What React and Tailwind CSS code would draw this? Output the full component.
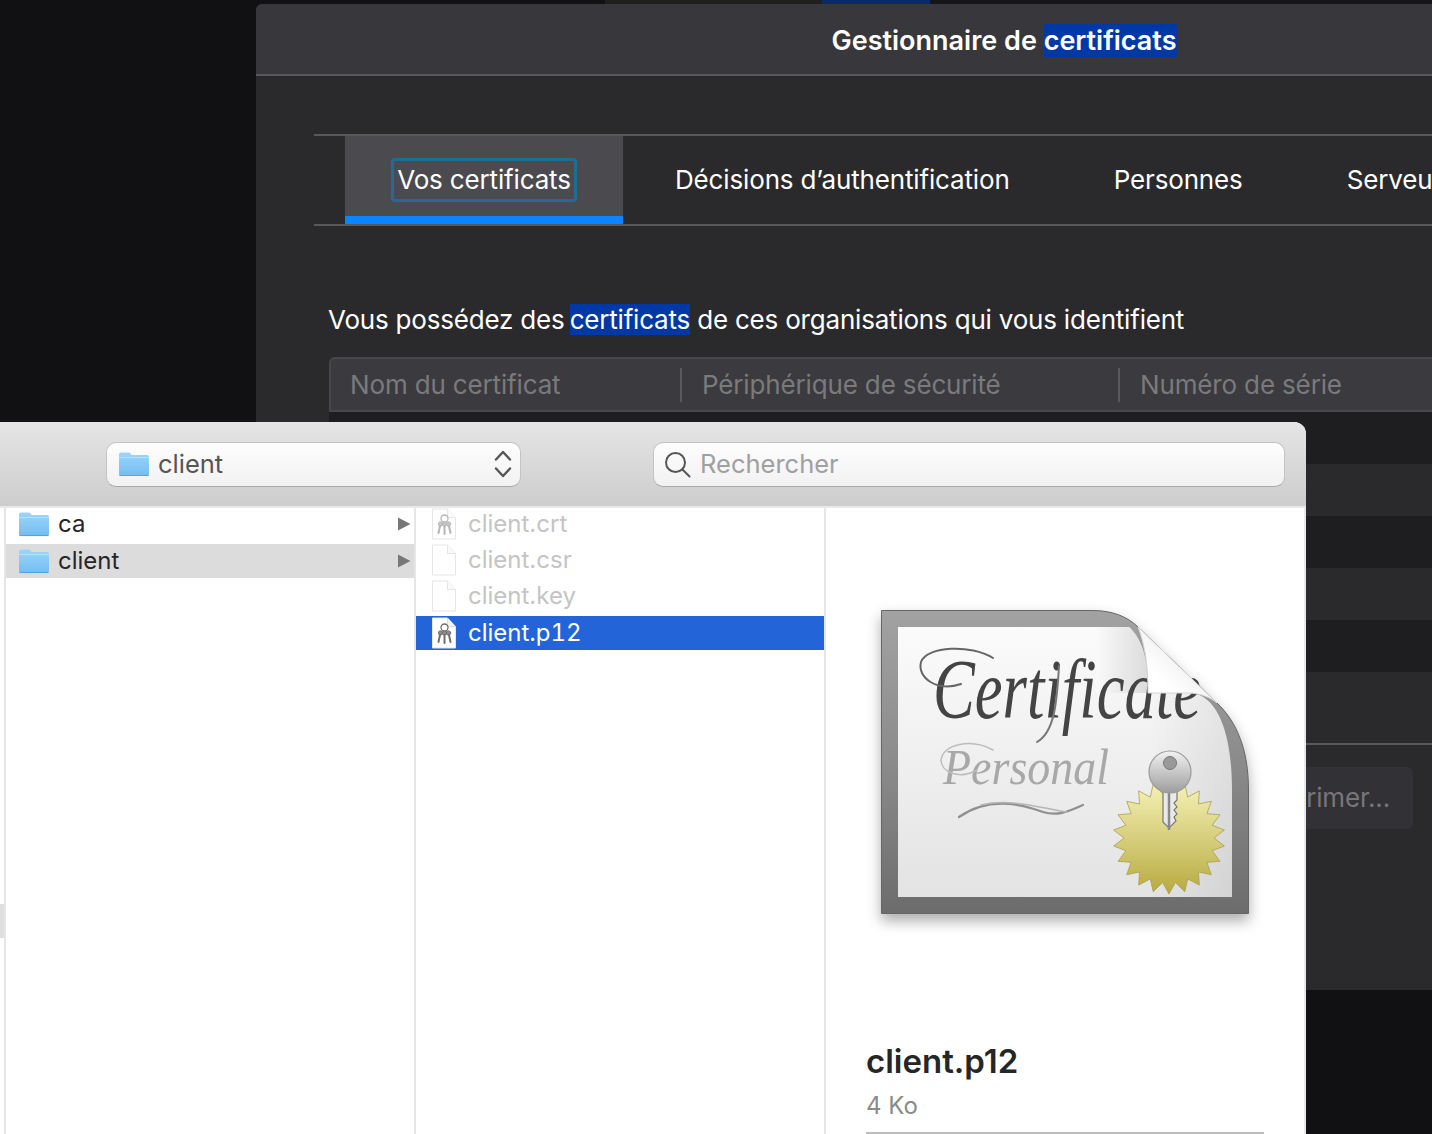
const FONT = { fontFamily: "Inter, 'Noto Sans', sans-serif" };

const ROWS = ["bg-[#1e1e20]", "bg-[#2a2a2d]", "bg-[#1e1e20]", "bg-[#2a2a2d]", "bg-[#1e1e20]", "bg-[#2a2a2d]"];

// 22 pointed seal behind the key
const SEAL_POINTS = Array.from({ length: 44 }, (_, i) => {
  const r = i % 2 === 0 ? 56 : 45;
  const a = (i / 44) * Math.PI * 2 - Math.PI / 2;
  return `${(298 + r * Math.cos(a)).toFixed(1)},${(238 + r * Math.sin(a)).toFixed(1)}`;
}).join(" ");

function FolderIcon({ id }) {
  return (
    <svg width="32" height="26" viewBox="0 0 32 26" className="shrink-0">
      <defs>
        <linearGradient id={id} x1="0" y1="0" x2="0" y2="1">
          <stop offset="0" stopColor="#9ad6fb" />
          <stop offset="1" stopColor="#74bdf1" />
        </linearGradient>
      </defs>
      <path d="M1 3.500C1 2.400 1.800 1.500 3 1.500h7.500c1 0 1.600.4 2.200 1.200l1 1.300H29c1.200 0 2 .8 2 2v17c0 1.200-.8 2-2 2H3c-1.200 0-2-.8-2-2z" fill={`url(#${id})`} />
      <path d="M1 6.500h30" stroke="#b6e2fc" strokeWidth="1" />
      <path d="M1.500 24.500h29" stroke="#5aa3d8" strokeWidth="1.200" />
    </svg>
  );
}

function FileIcon({ keys, dim }) {
  return (
    <svg width="26" height="32" viewBox="0 0 26 32" className={`-ml-px shrink-0 ${dim ? "opacity-50" : ""}`}>
      <path d="M1.500 1h15l8 8.500V31h-23z" fill="#fff" stroke={dim ? "#ccc" : "#e6e6e6"} strokeWidth="1" />
      <path d="M16.500 1v8.500h8" fill="#f4f4f4" stroke={dim ? "#ccc" : "#ddd"} strokeWidth="1" />
      {keys && (
        <g stroke="#6f6f6f" fill="none" strokeLinecap="round">
          <circle cx="13.500" cy="10.500" r="3.500" strokeWidth="1.300" />
          <circle cx="9.500" cy="16" r="2.200" fill="#8a8a8a" strokeWidth="0.800" />
          <circle cx="13.500" cy="16" r="2.200" fill="#8a8a8a" strokeWidth="0.800" />
          <circle cx="17.500" cy="16" r="2.200" fill="#8a8a8a" strokeWidth="0.800" />
          <path d="M9 18 7.500 25M13.500 18v8M18 18l1.500 7" strokeWidth="2" />
        </g>
      )}
    </svg>
  );
}

function Chevron() {
  return (
    <svg width="14" height="14" viewBox="0 0 14 14" className="ml-auto mr-[3px] shrink-0">
      <path d="M1 0.500 13.500 7 1 13.500z" fill="#777" />
    </svg>
  );
}

function CertificateIcon() {
  return (
    <svg width="400" height="340" viewBox="0 0 400 340" className="ml-[45px] mt-[92px] shrink-0 drop-shadow-[0_7px_7px_rgba(0,0,0,0.32)]">
      <defs>
        <linearGradient id="frame" x1="0" y1="0" x2="0" y2="1">
          <stop offset="0" stopColor="#a2a2a2" />
          <stop offset="0.5" stopColor="#8b8b8b" />
          <stop offset="1" stopColor="#6c6c6c" />
        </linearGradient>
        <linearGradient id="page" x1="0" y1="0" x2="0" y2="1">
          <stop offset="0" stopColor="#fbfbfb" />
          <stop offset="1" stopColor="#e3e3e4" />
        </linearGradient>
        <linearGradient id="shade" x1="0" y1="0" x2="1" y2="0">
          <stop offset="0.75" stopColor="#000" stopOpacity="0" />
          <stop offset="1" stopColor="#000" stopOpacity="0.07" />
        </linearGradient>
        <linearGradient id="flap" x1="0" y1="1" x2="1" y2="0">
          <stop offset="0.3" stopColor="#ffffff" />
          <stop offset="1" stopColor="#dcdcdc" />
        </linearGradient>
        <linearGradient id="curl" x1="0" y1="0" x2="1" y2="0">
          <stop offset="0" stopColor="#fafafa" />
          <stop offset="1" stopColor="#cfcfcf" />
        </linearGradient>
        <linearGradient id="seal" x1="0" y1="0" x2="0" y2="1">
          <stop offset="0" stopColor="#f5f3b8" />
          <stop offset="1" stopColor="#b8aa40" />
        </linearGradient>
        <linearGradient id="key" x1="0" y1="0" x2="0" y2="1">
          <stop offset="0" stopColor="#f2f2f2" />
          <stop offset="1" stopColor="#9d9d9d" />
        </linearGradient>
      </defs>
      <path d="M10.500 10.500H222C240 10.500 256 16 267 27L346 103C366 122 377.500 150 377.500 190V313.500H10.500Z" fill="url(#frame)" stroke="#666" strokeWidth="1" />
      <path d="M27 27H258C272 40 277 60 277 93H320C345 95 361 130 361 190V297H27Z" fill="url(#page)" />
      <path d="M225 27H258C272 40 277 60 277 93H225Z" fill="url(#curl)" opacity="0.7" />
      <path d="M27 27H258C272 40 277 60 277 93H320C345 95 361 130 361 190V297H27Z" fill="url(#shade)" />
      <g fontFamily="'Liberation Serif', serif" fontStyle="italic">
        <text x="62" y="118" fontSize="84" fill="#444" textLength="268" lengthAdjust="spacingAndGlyphs">Certificate</text>
        <text x="72" y="184" fontSize="50" fill="#a8a8a8" textLength="166" lengthAdjust="spacingAndGlyphs">Personal</text>
      </g>
      <g fill="none" strokeLinecap="round">
        <path d="M122 58C100 44 56 46 50 62C46 78 66 92 90 84" stroke="#666" strokeWidth="2" />
        <path d="M188 66C186 100 184 132 166 142" stroke="#777" strokeWidth="2" />
        <path d="M122 150C100 138 72 144 70 160C70 172 88 180 106 170" stroke="#bbb" strokeWidth="1.500" />
        <path d="M88 217C118 196 150 204 172 212C188 217 200 210 212 205" stroke="#8f8f8f" strokeWidth="2.200" />
        <path d="M110 205C140 198 170 208 196 212" stroke="#b5b5b5" strokeWidth="1.500" />
      </g>
      <path d="M267 27C274 45 277 65 277 93H320C330 94 339 97 346 103Z" fill="url(#flap)" stroke="#d5d5d5" strokeWidth="1" />
      <polygon points={SEAL_POINTS} fill="url(#seal)" stroke="#aaa04a" strokeWidth="0.800" />
      <path d="M292 188h14v12l-3 3 3 4-3 3 3 4-3 3 2 4-7 7-6-6z" fill="#e9e9e9" stroke="#777" strokeWidth="1.200" />
      <path d="M298 192v38" stroke="#888" strokeWidth="2.500" />
      <circle cx="299" cy="172" r="21" fill="url(#key)" stroke="#9a9a9a" strokeWidth="1.200" />
      <circle cx="299" cy="163" r="6.500" fill="#9a9a9a" stroke="#777" strokeWidth="1" />
    </svg>
  );
}

function CertManagerWindow() {
  return (
    <div className="absolute left-[256px] top-[4px] w-[1176px] h-[986px] overflow-hidden rounded-tl-md bg-[#2a2a2d] text-white text-[26px] tracking-[-0.15px] leading-8">
      <div className="flex h-[72px] items-center justify-center border-b-2 border-[#58585c] bg-[#37373c] pl-[320px] pt-[4px]">
        <h1 className="whitespace-nowrap font-semibold text-[27px] tracking-normal">
          Gestionnaire de <span className="bg-[#0039a6]">certificats</span>
        </h1>
      </div>

      <div className="ml-[58px] mt-[58px] flex h-[92px] w-[1200px] border-y-2 border-[#58585c] pl-[31px]">
        <div className="flex h-full w-[278px] shrink-0 items-center justify-center border-b-8 border-[#0a84ff] bg-[#4a4a4f]">
          <span className="mt-[8px] whitespace-nowrap rounded-[4px] border-[3px] border-[#216c97] px-[3px] py-[3px]">Vos certificats</span>
        </div>
        <div className="flex h-full shrink-0 items-center whitespace-nowrap pl-[52px] pr-[52px]">Décisions d’authentification</div>
        <div className="flex h-full shrink-0 items-center whitespace-nowrap px-[52px]">Personnes</div>
        <div className="flex h-full shrink-0 items-center whitespace-nowrap px-[52px]">Serveurs</div>
      </div>

      <div className="ml-[73px]">
        <p className="mt-[78px] -ml-px whitespace-nowrap tracking-[-0.2px]">
          Vous possédez des <span className="-ml-[2px] bg-[#0039a6]">certificats</span> de ces organisations qui vous identifient
        </p>

        <div className="mt-[21px] flex h-[55px] w-[1200px] items-center rounded-t-md border-2 border-[#47474b] bg-[#3a3a3f] text-[#7a7a7d]">
          <div className="flex h-[34px] w-[351px] shrink-0 items-center border-r-2 border-[#5a5a5e] pl-[19px]">Nom du certificat</div>
          <div className="flex h-[34px] w-[438px] shrink-0 items-center border-r-2 border-[#5a5a5e] pl-[20px]">Périphérique de sécurité</div>
          <div className="flex h-[34px] shrink-0 items-center pl-[20px]">Numéro de série</div>
        </div>
      </div>

      <div className="ml-[73px] h-[333px] overflow-hidden border-b-2 border-[#58585c]">
        {ROWS.map((bg, i) => (
          <div key={i} className={`h-[52px] ${bg}`} />
        ))}
      </div>

      <div className="flex justify-end pr-[19px] pt-[22px]">
        <div className="flex h-[62px] items-center rounded-md bg-[#313136] px-[23px] text-[#77777a]">Supprimer...</div>
      </div>
    </div>
  );
}

function FinderRow({ selected, grey, children }) {
  const tone = selected ? "bg-[#2364d8] text-white" : grey ? "bg-[#dcdcdc] text-[#262626]" : "text-[#262626]";
  return <div className={`flex h-[34px] items-center ${tone}`}>{children}</div>;
}

function OpenSheet() {
  return (
    <div className="absolute left-0 top-[422px] flex h-[712px] w-[1306px] flex-col overflow-hidden rounded-tr-xl bg-white text-[24px]">
      <div className="relative z-10 flex h-[86px] shrink-0 items-center border-b-2 border-[#e9e9e9] bg-linear-to-b from-[#e5e5e5] to-[#cdcdcd] pl-[106px] pr-[21px] text-[25.5px]">
        <div className="flex h-[45px] w-[415px] shrink-0 items-center rounded-[10px] border border-[#c4c4c4] border-b-[#a9a9a9] bg-linear-to-b from-[#fdfdfd] to-[#f2f2f2] pl-[11px] pr-[8px] text-[#555]">
          <FolderIcon id="folder-popup" />
          <span className="ml-[8px]">client</span>
          <svg width="18" height="30" viewBox="0 0 18 30" className="ml-auto" fill="none" stroke="#555" strokeWidth="2.400" strokeLinecap="round" strokeLinejoin="round">
            <path d="M2 10.500 9 3l7 7.500M2 19.500 9 27l7-7.500" />
          </svg>
        </div>
        <div className="ml-[132px] flex h-[45px] flex-1 items-center rounded-[10px] border border-[#c4c4c4] border-b-[#a9a9a9] bg-linear-to-b from-[#fdfdfd] to-[#f2f2f2] pl-[10px] text-[#a0a0a0]">
          <svg width="27" height="27" viewBox="0 0 27 27" fill="none" stroke="#555" strokeWidth="2" strokeLinecap="round">
            <circle cx="11.500" cy="11.500" r="9.500" />
            <path d="M18.500 18.500 25.500 25.500" />
          </svg>
          <span className="ml-[9px]">Rechercher</span>
        </div>
      </div>

      <div className="flex min-h-0 flex-1 pl-[4px]">
        <div className="w-[412px] shrink-0 border-x-2 border-[#e6e6e6]">
          <div className="-mt-[2px] flex h-[36px] items-center pl-[12px] text-[#262626]">
            <FolderIcon id="folder-ca" />
            <span className="ml-[8px]">ca</span>
            <Chevron />
          </div>
          <div className="mt-[2px]">
            <FinderRow grey>
              <div className="ml-[12px] flex w-full items-center">
                <FolderIcon id="folder-client" />
                <span className="ml-[8px] -mt-px">client</span>
                <Chevron />
              </div>
            </FinderRow>
          </div>
        </div>

        <div className="w-[410px] shrink-0 border-r-2 border-[#e6e6e6]">
          <div className="-mt-[2px] flex h-[36px] items-center pl-[16px] text-[#c4c4c4]">
            <FileIcon keys dim />
            <span className="ml-[11px]">client.crt</span>
          </div>
          <div className="flex h-[36px] items-center pl-[16px] text-[#c4c4c4]">
            <FileIcon dim />
            <span className="ml-[11px]">client.csr</span>
          </div>
          <div className="flex h-[36px] items-center pl-[16px] text-[#c4c4c4]">
            <FileIcon dim />
            <span className="ml-[11px]">client.key</span>
          </div>
          <div className="mt-[2px]">
            <FinderRow selected>
              <div className="flex items-center pl-[16px]">
                <FileIcon keys />
                <span className="ml-[11px] -mt-px tabular-nums">client.p12</span>
              </div>
            </FinderRow>
          </div>
        </div>

        <div className="flex min-w-0 flex-1 flex-col border-r-2 border-[#e8e8e8]">
          <CertificateIcon />
          <p className="ml-[40px] mt-[101px] text-[33px] font-semibold leading-10 text-[#262626]">client.p12</p>
          <p className="ml-[40px] mt-[9px] text-[24px] leading-8 text-[#8a8a8a]">4 Ko</p>
          <div className="ml-[40px] mt-[10px] w-[398px] border-t-2 border-[#bdbdbd]" />
        </div>
      </div>

      <div className="absolute bottom-[196px] left-0 h-[34px] w-[4px] bg-[#dedede]" />
    </div>
  );
}

export default function App() {
  return (
    <div className="relative h-[1134px] w-[1432px] overflow-hidden bg-[#111113]" style={FONT}>
      <div className="flex h-[4px]">
        <div className="w-[605px] bg-[#111113]" />
        <div className="w-[217px] bg-[#1f1f1d]" />
        <div className="w-[108px] bg-[#0a2a6e]" />
        <div className="flex-1 bg-[#151517]" />
      </div>
      <CertManagerWindow />
      <OpenSheet />
    </div>
  );
}
